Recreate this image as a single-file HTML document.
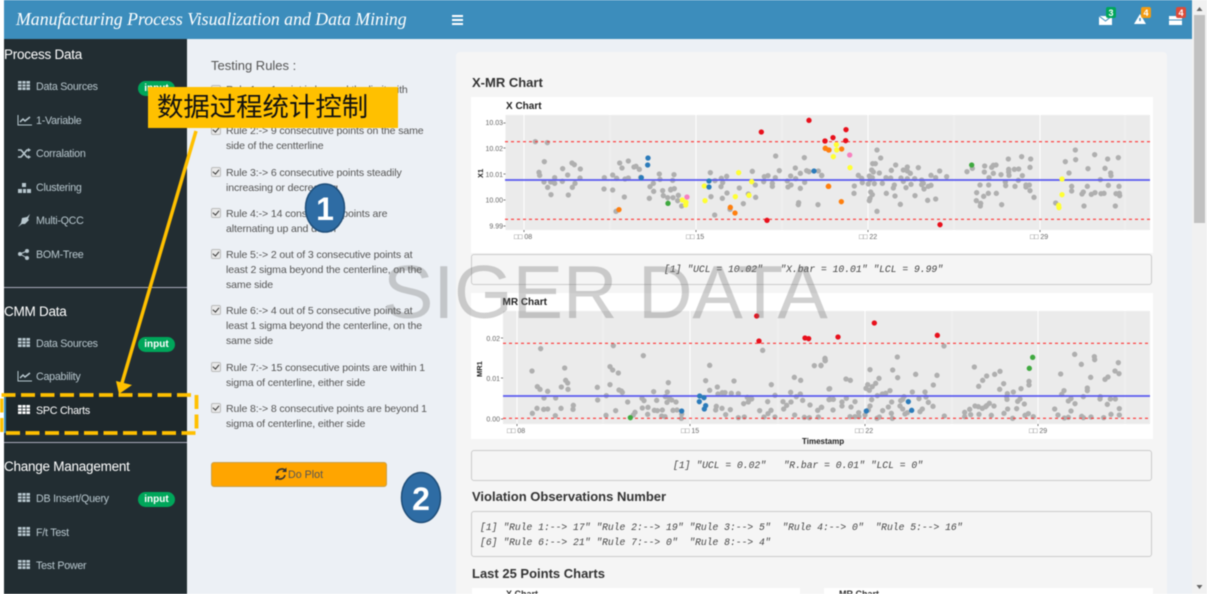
<!DOCTYPE html>
<html><head><meta charset="utf-8">
<style>
html,body{margin:0;padding:0;width:1207px;height:594px;overflow:hidden;background:#fff}
#p{position:absolute;left:0;top:0;width:1207px;height:594px;overflow:hidden;font-family:"Liberation Sans",sans-serif;filter:blur(.4px)}
.a{position:absolute;white-space:nowrap}
.h{color:#fff;font-size:13.5px;left:4px;letter-spacing:-.25px}
.n{color:#b8c7ce;font-size:10.7px;left:36px;letter-spacing:-.25px}
.b{position:absolute;left:138px;width:37px;height:15px;border-radius:8px;background:#00a65a;color:#fff;font-size:10px;font-weight:bold;text-align:center;line-height:15px}
.r{left:226px;color:#555;font-size:10.55px;line-height:15px;letter-spacing:-.12px}
.c{position:absolute;left:211px;width:8px;height:8px;background:#e9e9e9;border:.5px solid #bbb;border-radius:2px}
.c:after{content:"";position:absolute;left:2px;top:0;width:2.5px;height:5px;border:solid #333;border-width:0 1.5px 1.5px 0;transform:rotate(40deg)}
.t{font-weight:bold;color:#333;font-size:13px;left:472px}
.pre{position:absolute;background:#f5f5f5;border:1px solid #ccc;border-radius:3px;font-family:"Liberation Mono",monospace;font-style:italic;color:#444;font-size:9.7px;box-sizing:border-box}
svg{position:absolute;left:0;top:0}
.ico{fill:#b8c7ce}
</style></head><body><div id="p">
<div class="a" style="left:0;top:0;width:1192px;height:594px;background:#ecf0f5"></div>
<div class="a" style="left:3.5px;top:39px;width:183.5px;height:555px;background:#222d32"></div>
<div class="a" style="left:0;top:0;width:3.5px;height:594px;background:#fff"></div>
<div class="a" style="left:3.5px;top:0;width:1188.5px;height:39px;background:#3c8dbc"></div>
<div class="a" style="left:1192px;top:0;width:15px;height:594px;background:#f1f1f1"></div>
<div class="a" style="left:1194px;top:15px;width:11px;height:208px;background:#c1c1c1"></div>
<div class="a" style="left:16px;top:9px;color:#fff;font:italic 17.8px 'Liberation Serif',serif">Manufacturing Process Visualization and Data Mining</div>
<div class="a" style="left:452px;top:15px;width:11px;height:2px;background:#fff;box-shadow:0 4px #fff,0 8px #fff"></div>

<div class="a" style="left:3.5px;top:287px;width:183.5px;height:1px;background:#aab"></div>
<div class="a" style="left:3.5px;top:442px;width:183.5px;height:1px;background:#aab"></div>
<div class="a" style="left:3.5px;top:395px;width:183.5px;height:38px;background:#1e282c"></div>
<div class="a" style="left:3.5px;top:395px;width:2px;height:38px;background:#3c8dbc"></div>

<div class="a h" style="top:47px">Process Data</div>
<div class="a h" style="top:304px">CMM Data</div>
<div class="a h" style="top:459px">Change Management</div>
<div class="a n" style="top:81px">Data Sources</div>
<div class="a n" style="top:115px">1-Variable</div>
<div class="a n" style="top:148px">Corralation</div>
<div class="a n" style="top:182px">Clustering</div>
<div class="a n" style="top:215px">Multi-QCC</div>
<div class="a n" style="top:249px">BOM-Tree</div>
<div class="a n" style="top:338px">Data Sources</div>
<div class="a n" style="top:371px">Capability</div>
<div class="a n" style="top:405px;color:#fff">SPC Charts</div>
<div class="a n" style="top:493px">DB Insert/Query</div>
<div class="a n" style="top:527px">F/t Test</div>
<div class="a n" style="top:560px">Test Power</div>
<div class="b" style="top:81px">input</div>
<div class="b" style="top:337px">input</div>
<div class="b" style="top:492px">input</div>

<svg width="1207" height="594">
<defs><g id="gr"><path d="M0 0h12v9H0z" /><path d="M4 0v9M8 0v9M0 3h12M0 6h12" stroke="#222d32" stroke-width=".8"/></g>
<g id="ln"><path d="M0 0v10h14" fill="none" stroke="#b8c7ce" stroke-width="1"/><path d="M2 7l3-3 2 2 5-4" fill="none" stroke="#b8c7ce" stroke-width="1.5"/></g></defs>
<use href="#gr" x="18" y="81" class="ico"/>
<use href="#ln" x="18" y="115"/>
<path d="M18 150h3l6 7h2M18 157h3l6-7h2" fill="none" stroke="#b8c7ce" stroke-width="1.6"/><path d="M28 148l3 2-3 2zM28 155l3 2-3 2z" class="ico"/>
<path d="M22 183h4v4h-4zM18 189h4v4h-4zM23 189h3v4h-3zM27 189h4v4h-4z" class="ico"/>
<path d="M18 227l3-4 1-5 5-1 3-3-2 5 1 1-4 4-3 0z" class="ico"/>
<circle cx="20" cy="254" r="2" class="ico"/><circle cx="27" cy="251" r="2" class="ico"/><circle cx="27" cy="258" r="2" class="ico"/><path d="M20 254l7-3M20 254l7 4" stroke="#b8c7ce"/>
<use href="#gr" x="18" y="338" class="ico"/>
<use href="#ln" x="18" y="371"/>
<use href="#gr" x="18" y="405" style="fill:#fff"/>
<use href="#gr" x="18" y="493" class="ico"/>
<use href="#gr" x="18" y="527" class="ico"/>
<use href="#gr" x="18" y="560" class="ico"/>
</svg>

<div class="a" style="left:211px;top:58px;color:#555;font-size:13px">Testing Rules :</div>
<div class="c" style="top:85px"></div>
<div class="a r" style="top:83px">Rule 1:-> 1 point is beyond the limit with</div>
<div class="c" style="top:125px"></div>
<div class="a r" style="top:123.500px">Rule 2:-> 9 consecutive points on the same<br>side of the centterline</div>
<div class="c" style="top:167px"></div>
<div class="a r" style="top:165.500px">Rule 3:-> 6 consecutive points steadily<br>increasing or decreasing</div>
<div class="c" style="top:208px"></div>
<div class="a r" style="top:206.500px">Rule 4:-> 14 consecutive points are<br>alternating up and down</div>
<div class="c" style="top:249px"></div>
<div class="a r" style="top:248px">Rule 5:-> 2 out of 3 consecutive points at<br>least 2 sigma beyond the centerline, on the<br>same side</div>
<div class="c" style="top:305px"></div>
<div class="a r" style="top:303.500px">Rule 6:-> 4 out of 5 consecutive points at<br>least 1 sigma beyond the centerline, on the<br>same side</div>
<div class="c" style="top:362px"></div>
<div class="a r" style="top:360.500px">Rule 7:-> 15 consecutive points are within 1<br>sigma of centerline, either side</div>
<div class="c" style="top:403px"></div>
<div class="a r" style="top:401.500px">Rule 8:-> 8 consecutive points are beyond 1<br>sigma of centerline, either side</div>
<div class="a" style="left:211px;top:462px;width:176px;height:25px;background:#ffa500;border:1px solid #c9a04a;box-sizing:border-box;border-radius:3px;color:#555;font-size:10.7px;line-height:24px;padding-left:76px">Do Plot</div>
<svg width="1207" height="594"><path d="M277 473a5 5 0 0 1 8.500-2.500M285 475a5 5 0 0 1-8.500 2.500" fill="none" stroke="#333" stroke-width="1.600"/><path d="M286.500 467.500v4.500h-4.500zM275.500 480.500v-4.500h4.500z" fill="#333"/></svg>

<div class="a" style="left:456px;top:52px;width:711px;height:542px;background:#f5f5f5;border-radius:4px 4px 0 0"></div>
<div class="a t" style="top:74.500px">X-MR Chart</div>
<div class="a" style="left:471px;top:97px;width:682px;height:156px;background:#fff"></div>
<div class="a" style="left:471px;top:293px;width:682px;height:146px;background:#fff"></div>
<div class="pre" style="left:471px;top:254px;width:681px;height:31px;line-height:29px;padding-left:192px">[1] "UCL = 10.02"&nbsp;&nbsp; "X.bar = 10.01" "LCL = 9.99"</div>
<div class="pre" style="left:471px;top:450px;width:681px;height:31px;line-height:29px;padding-left:201px">[1] "UCL = 0.02"&nbsp;&nbsp; "R.bar = 0.01" "LCL = 0"</div>
<div class="a t" style="top:489px">Violation Observations Number</div>
<div class="pre" style="left:471px;top:511px;width:681px;height:46px;line-height:15px;padding:8px 0 0 8px">[1] "Rule 1:--&gt; 17" "Rule 2:--&gt; 19" "Rule 3:--&gt; 5"&nbsp; "Rule 4:--&gt; 0"&nbsp; "Rule 5:--&gt; 16"<br>[6] "Rule 6:--&gt; 21" "Rule 7:--&gt; 0"&nbsp; "Rule 8:--&gt; 4"</div>
<div class="a t" style="top:565.500px">Last 25 Points Charts</div>
<div class="a" style="left:472px;top:588px;width:328px;height:6px;background:#fff"></div>
<div class="a" style="left:824px;top:588px;width:329px;height:6px;background:#fff"></div>
<div class="a" style="left:506px;top:589px;font-size:9px;font-weight:bold;color:#333">X Chart</div>
<div class="a" style="left:839px;top:589px;font-size:9px;font-weight:bold;color:#333">MR Chart</div>

<svg width="1207" height="594" font-family="Liberation Sans, sans-serif">
<rect x="505.500" y="115" width="644.500" height="115" fill="#ebebeb"/>
<rect x="503" y="311" width="647" height="113" fill="#ebebeb"/>
<path d="M524 115v115M696 115v115M868 115v115M1040 115v115" stroke="#fff" stroke-width="1"/>
<path d="M610 115v115M782 115v115M954 115v115M1125 115v115" stroke="#f5f5f5" stroke-width=".7"/>
<path d="M517 311v113M690 311v113M865 311v113M1038 311v113" stroke="#fff" stroke-width="1"/>
<path d="M603 311v113M778 311v113M952 311v113M1125 311v113" stroke="#f5f5f5" stroke-width=".7"/>
<path d="M503.500 123h2M503.500 148h2M503.500 174h2M503.500 200h2M503.500 226h2M501 338h2M501 378h2M501 419h2M524 230v2M696 230v2M868 230v2M1040 230v2M517 424v2M690 424v2M865 424v2M1038 424v2" stroke="#555" stroke-width=".8"/>
<text x="506" y="109" font-size="10" font-weight="bold" fill="#222">X Chart</text>
<text x="502.500" y="305" font-size="10" font-weight="bold" fill="#222">MR Chart</text>
<g font-size="7" fill="#666" text-anchor="end">
<text x="503" y="125">10.03</text><text x="503" y="151">10.02</text><text x="503" y="177">10.01</text><text x="503" y="202.500">10.00</text><text x="503" y="228.500">9.99</text>
<text x="500" y="341">0.02</text><text x="500" y="381">0.01</text><text x="500" y="421.500">0.00</text>
</g>
<g font-size="7" fill="#666">
<text x="514" y="239">□□ 08</text><text x="686" y="239">□□ 15</text><text x="859" y="239">□□ 22</text><text x="1030" y="239">□□ 29</text>
<text x="507" y="433">□□ 08</text><text x="681" y="433">□□ 15</text><text x="855" y="433">□□ 22</text><text x="1029" y="433">□□ 29</text>
</g>
<text transform="translate(483 178) rotate(-90)" font-size="7.500" font-weight="bold" fill="#222">X1</text>
<text transform="translate(482 377) rotate(-90)" font-size="7.500" font-weight="bold" fill="#222">MR1</text>
<text x="802" y="444" font-size="8" font-weight="bold" fill="#222">Timestamp</text>

<g fill="none" stroke-linecap="round" stroke-width="5">
<g transform="translate(460 70) scale(.33333)" stroke-width="16">
<path stroke="#afafaf" d="M226 215h0M262 218h0M253 275h0M237 307h0M239 316h0M252 336h0M272 336h0M263 352h0M284 323h0M284 340h0M273 374h0M308 296h0M323 315h0M307 334h0M336 279h0M343 284h0M361 297h0M360 324h0M345 340h0M337 352h0M325 375h0M433 323h0M432 357h0M458 315h0M470 325h0M458 360h0M479 279h0M486 294h0M505 273h0M493 381h0M468 424h0M495 327h0M505 324h0M522 291h0M528 289h0M538 298h0M542 322h0M570 350h0M580 340h0M581 364h0M568 385h0M598 312h0M600 328h0M608 362h0M610 377h0M623 383h0M632 358h0M632 360h0M643 356h0M639 383h0M642 314h0M638 331h0M655 376h0M653 392h0M665 408h0M751 308h0M765 332h0M753 380h0M764 435h0M783 350h0M788 338h0M784 325h0M800 319h0M801 369h0M787 385h0M810 418h0M838 354h0M850 401h0M865 372h0M887 382h0M877 304h0M886 345h0M911 335h0M913 320h0M924 317h0M937 340h0M937 349h0M946 323h0M947 258h0M958 302h0M982 333h0M992 318h0M1006 294h0M1021 310h0M1033 263h0M1040 302h0M1047 305h0M1034 337h0M1021 355h0M993 345h0M984 351h0M1007 326h0M1016 398h0M1015 404h0M1074 404h0M1075 303h0M1085 317h0"/>
</g>
<g transform="translate(820 70) scale(.33333)" stroke-width="16">
<path stroke="#afafaf" d="M5 316h0M115 316h0M125 325h0M127 338h0M145 342h0M148 318h0M155 300h0M160 306h0M158 281h0M166 281h0M171 240h0M182 264h0M178 309h0M163 341h0M150 330h0M157 323h0M187 340h0M198 323h0M212 324h0M214 301h0M227 285h0M250 300h0M262 291h0M262 303h0M271 310h0M243 324h0M250 334h0M262 326h0M284 326h0M305 330h0M310 340h0M223 345h0M220 354h0M258 353h0M273 343h0M305 344h0M312 357h0M325 349h0M333 346h0M333 316h0M347 323h0M359 303h0M380 320h0M295 293h0M103 348h0M102 370h0M157 374h0M152 366h0M150 385h0M148 392h0M199 370h0M225 378h0M241 403h0M285 377h0M323 391h0M347 387h0M171 424h0M441 305h0M457 295h0M494 288h0M493 306h0M515 292h0M520 286h0M528 285h0M520 310h0M507 323h0M480 345h0M506 345h0M470 368h0M505 370h0M529 370h0M491 379h0M469 392h0M482 400h0M481 408h0M545 404h0M565 267h0M605 260h0M632 267h0M630 292h0M566 298h0M583 298h0M596 297h0M566 306h0M567 316h0M543 314h0M607 317h0M595 331h0M556 336h0M557 347h0M585 349h0M618 345h0M628 345h0M618 351h0M630 362h0M642 382h0M736 275h0M766 240h0M767 269h0M824 254h0M863 267h0M895 263h0M804 296h0M855 295h0M872 309h0M873 317h0M841 329h0M747 309h0M755 349h0M755 363h0M802 349h0M865 346h0M897 349h0M786 372h0M790 366h0M814 373h0M825 368h0M843 371h0M852 370h0M888 371h0M898 370h0M899 377h0M707 399h0M792 408h0M886 408h0"/>
</g>
<path d="M505 141.700h645M505 219.300h645" stroke="#f33" stroke-width="1.200" stroke-dasharray="3 3" stroke-linecap="butt"/>
<path d="M505 180h645" stroke="#5a5af0" stroke-width="1.800" stroke-linecap="butt"/>
<g transform="translate(460 70) scale(.33333)" stroke-width="16">
<path stroke="#e8101c" d="M904 186h0M1047 151h0M1095 213h0M921 451h0"/>
<path stroke="#ff7f0e" d="M477 419h0M811 412h0M825 429h0M1096 235h0M1106 240h0M1105 349h0"/>
<path stroke="#ffff33" d="M733 348h0M735 392h0M836 308h0M826 380h0M867 376h0M875 335h0M667 390h0M678 397h0M677 405h0"/>
<path stroke="#2b7bba" d="M564 264h0M563 285h0M544 323h0M747 333h0M747 351h0M1062 303h0"/>
<path stroke="#f781bf" d="M681 381h0"/><path stroke="#3fa93f" d="M624 400h0"/>
</g>
<g transform="translate(820 70) scale(.33333)" stroke-width="16">
<path stroke="#e8101c" d="M15 213h0M39 203h0M78 179h0M77 212h0M360 464h0"/>
<path stroke="#ff7f0e" d="M16 235h0M27 240h0M65 237h0M26 349h0M64 395h0"/>
<path stroke="#ffff33" d="M49 224h0M50 240h0M40 260h0M90 293h0M726 327h0M726 374h0M716 406h0M717 413h0"/>
<path stroke="#f781bf" d="M89 255h0"/><path stroke="#3fa93f" d="M455 285h0"/>
</g>

<g transform="translate(460 290) scale(.33333)" stroke-width="16">
<path stroke="#afafaf" d="M242 176h0M216 243h0M232 290h0M240 298h0M252 324h0M263 304h0M231 355h0M251 358h0M263 357h0M217 370h0M287 324h0M303 355h0M286 377h0M304 291h0M314 234h0M317 271h0M323 279h0M324 298h0M340 346h0M339 358h0M412 292h0M413 330h0M438 376h0M439 317h0M450 284h0M450 230h0M458 240h0M475 249h0M460 167h0M467 362h0M477 300h0M484 303h0M487 307h0M503 336h0M525 367h0M520 375h0M546 325h0M552 332h0M547 354h0M564 352h0M563 373h0M550 197h0M581 305h0M590 331h0M583 361h0M592 362h0M607 360h0M605 378h0M615 380h0M625 278h0M622 306h0M616 320h0M628 324h0M635 330h0M621 337h0M648 336h0M639 361h0M651 360h0M665 372h0M664 385h0M737 272h0M749 226h0M749 301h0M769 349h0M767 360h0M786 355h0M797 374h0M811 359h0M772 291h0M774 312h0M787 308h0M795 308h0M814 310h0M822 273h0M835 311h0M835 383h0M853 381h0M851 341h0M862 322h0M865 336h0M873 323h0M875 327h0M899 362h0M908 181h0M934 284h0M945 316h0M923 335h0M933 361h0M924 371h0M912 381h0M945 381h0M969 335h0M971 357h0M980 346h0M992 307h0M993 336h0M1003 262h0M1022 271h0M1009 320h0M1021 312h0M1028 331h0M1004 375h0M1033 382h0M1050 345h0M1048 383h0M1075 381h0M1073 361h0M1085 352h0M1063 227h0M1083 226h0M1095 207h0M1096 212h0M1107 297h0M1107 329h0"/>
</g>
<g transform="translate(820 290) scale(.33333)" stroke-width="16">
<path stroke="#afafaf" d="M15 205h0M15 212h0M3 227h0M29 296h0M78 267h0M91 271h0M30 328h0M40 328h0M66 336h0M79 325h0M66 348h0M93 351h0M105 335h0M4 352h0M39 360h0M90 380h0M105 380h0M116 368h0M117 380h0M135 375h0M150 239h0M143 284h0M138 295h0M148 301h0M157 290h0M167 280h0M177 265h0M218 240h0M232 201h0M233 263h0M287 253h0M351 256h0M340 285h0M372 168h0M210 302h0M197 310h0M187 312h0M172 317h0M155 329h0M215 336h0M205 351h0M188 362h0M150 348h0M145 360h0M214 370h0M217 385h0M178 381h0M171 385h0M242 332h0M248 328h0M252 320h0M277 306h0M297 326h0M315 306h0M318 321h0M325 337h0M339 349h0M240 348h0M248 357h0M255 372h0M262 368h0M307 357h0M300 365h0M373 378h0M463 231h0M476 289h0M488 271h0M500 258h0M524 253h0M540 244h0M551 281h0M539 298h0M562 311h0M560 320h0M561 328h0M580 306h0M603 296h0M627 274h0M627 285h0M600 327h0M593 334h0M613 342h0M590 356h0M563 357h0M552 370h0M578 385h0M615 376h0M625 371h0M640 380h0M465 348h0M475 350h0M487 355h0M497 350h0M508 340h0M500 347h0M522 348h0M514 376h0M477 373h0M449 358h0M434 367h0M452 374h0M434 380h0M722 252h0M732 302h0M725 313h0M753 326h0M745 333h0M765 341h0M704 357h0M714 375h0M733 384h0M745 382h0M753 363h0M785 379h0M790 383h0M813 381h0M851 383h0M873 373h0M898 375h0M898 356h0M862 343h0M841 320h0M840 327h0M871 327h0M886 327h0M790 320h0M802 294h0M802 302h0M812 262h0M784 223h0M764 193h0M823 200h0M824 209h0M855 268h0M864 261h0M885 243h0M897 251h0M895 218h0"/>
</g>
<path d="M503 343.300h647M503 418.300h647" stroke="#f33" stroke-width="1.200" stroke-dasharray="3 3" stroke-linecap="butt"/>
<path d="M503 396h647" stroke="#5a5af0" stroke-width="1.800" stroke-linecap="butt"/>
<g transform="translate(460 290) scale(.33333)" stroke-width="16">
<path stroke="#e8101c" d="M890 78h0M897 153h0M1035 144h0M1046 146h0"/>
<path stroke="#2b7bba" d="M665 363h0M719 318h0M732 323h0M718 335h0M737 347h0M733 357h0"/>
<path stroke="#3fa93f" d="M511 383h0"/>
</g>
<g transform="translate(820 290) scale(.33333)" stroke-width="16">
<path stroke="#e8101c" d="M54 141h0M163 99h0M352 136h0"/>
<path stroke="#2b7bba" d="M139 363h0M265 335h0M275 361h0"/>
<path stroke="#3fa93f" d="M638 202h0M628 235h0"/>
</g>
</g>

<path d="M1099 16h13v9h-13z" fill="#fff"/><path d="M1099 16l6.500 5 6.500-5" fill="none" stroke="#3c8dbc"/>
<path d="M1134 24l6-10 6 10z" fill="#fff"/><path d="M1140 18v3" stroke="#3c8dbc" stroke-width="1.500"/>
<path d="M1169 16h13v9h-13z" fill="#fff"/><path d="M1169 20h13" stroke="#3c8dbc"/>
<rect x="1106" y="7" width="10" height="11" rx="2" fill="#00a65a"/>
<rect x="1141" y="7" width="10" height="11" rx="2" fill="#f39c12"/>
<rect x="1176" y="7" width="10" height="11" rx="2" fill="#dd4b39"/>
<g font-size="9" font-weight="bold" fill="#fff" text-anchor="middle"><text x="1111" y="16">3</text><text x="1146" y="16">4</text><text x="1181" y="16">4</text></g>
<path d="M1199.500 7l-3 4h6zM1199.500 589l-3-4h6z" fill="#666"/>
</svg>

<div class="a" style="left:383px;top:250px;font-size:75.6px;color:rgba(110,110,110,.32);letter-spacing:-.2px">SIGER DATA</div>

<svg width="1207" height="594">
<path d="M196 131L122 383" stroke="#ffc000" stroke-width="3.500"/>
<path d="M116 381l16 4-13 9z" fill="#ffc000"/>
<rect x="1.500" y="395" width="195" height="38" fill="none" stroke="#ffc000" stroke-width="3.800" stroke-dasharray="14 5.500"/>
<ellipse cx="325" cy="208" rx="19.500" ry="24" fill="#2e6ca4" stroke="#1f4e79" stroke-width="1.500"/>
<ellipse cx="421" cy="497.500" rx="19.500" ry="25" fill="#2e6ca4" stroke="#1f4e79" stroke-width="1.500"/>
<text x="325" y="220" font-family="Liberation Sans, sans-serif" font-size="32" font-weight="bold" fill="#fff" text-anchor="middle">1</text>
<text x="421" y="510" font-family="Liberation Sans, sans-serif" font-size="32" font-weight="bold" fill="#fff" text-anchor="middle">2</text>
</svg>
<div class="a" style="left:148px;top:87px;width:250px;height:41px;background:#ffc000;color:#111;font-family:'Liberation Sans','Noto Sans CJK SC',sans-serif;font-size:26.4px;line-height:41px;padding-left:9px;box-sizing:border-box">数据过程统计控制</div>
</div></body></html>
